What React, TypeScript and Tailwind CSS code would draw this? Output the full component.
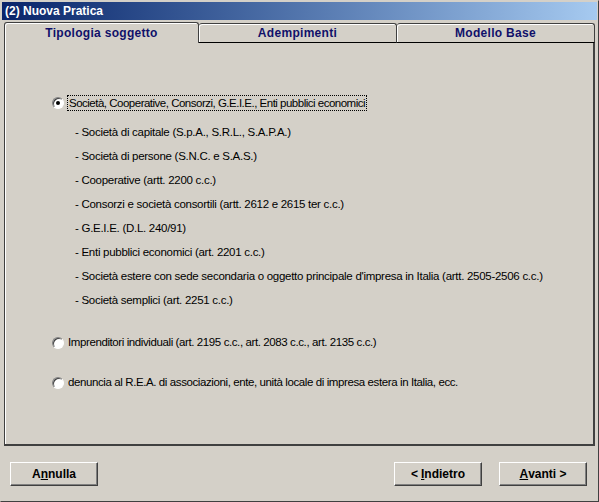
import React from "react"

const items = [
  "- Società di capitale (S.p.A., S.R.L., S.A.P.A.)",
  "- Società di persone (S.N.C. e S.A.S.)",
  "- Cooperative (artt. 2200 c.c.)",
  "- Consorzi e società consortili (artt. 2612 e 2615 ter c.c.)",
  "- G.E.I.E. (D.L. 240/91)",
  "- Enti pubblici economici (art. 2201 c.c.)",
  "- Società estere con sede secondaria o oggetto principale d'impresa in Italia (artt. 2505-2506 c.c.)",
  "- Società semplici (art. 2251 c.c.)",
]

function Radio({ checked }: { checked?: boolean }) {
  return (
    <span className="w-[12px] h-[12px] rounded-full bg-white border border-t-[#808080] border-l-[#808080] border-b-white border-r-white shadow-[inset_1px_1px_0_#404040] flex items-center justify-center shrink-0">
      {checked && <span className="w-[4px] h-[4px] rounded-full bg-black" />}
    </span>
  )
}

function Button({ children }: { children: React.ReactNode }) {
  return (
    <button className="w-[88px] h-[24px] bg-[#d4d0c8] border border-t-white border-l-white border-r-[#404040] border-b-[#404040] shadow-[inset_-1px_-1px_0_#808080] text-[12px] font-bold text-black flex items-center justify-center">
      {children}
    </button>
  )
}

export default function App() {
  return (
    <div
      className="w-[599px] h-[502px] bg-[#d4d0c8] border border-t-[#d4d0c8] border-l-[#d4d0c8] border-r-[#404040] border-b-[#404040] flex flex-col"
      style={{ fontFamily: '"Liberation Sans", Arial, sans-serif' }}
    >
      {/* title bar */}
      <div className="h-[18px] mx-[1px] mt-[1px] bg-gradient-to-r from-[#0a246a] to-[#a6caf0] flex items-center px-[3px]">
        <span className="text-white text-[12px] font-bold">(2) Nuova Pratica</span>
      </div>

      {/* tabs */}
      <div className="flex px-[3px] pt-[2px] h-[23px]">
        <div className="w-[195px] h-[21px] -mb-[1px] relative z-10 bg-[#d4d0c8] border-t border-l border-r border-t-[#404040] border-l-[#404040] border-r-[#404040] rounded-t-[3px] shadow-[inset_1px_1px_0_white] flex items-center justify-center">
          <span className="text-[12px] font-bold text-[#10106a] tracking-[0.3px]">Tipologia soggetto</span>
        </div>
        <div className="w-[198px] h-[20px] mt-[1px] bg-[#d4d0c8] border-t border-r border-[#404040] border-b border-b-black rounded-t-[3px] shadow-[inset_1px_1px_0_white] flex items-center justify-center">
          <span className="text-[12px] font-bold text-[#10106a] tracking-[0.3px]">Adempimenti</span>
        </div>
        <div className="w-[198px] h-[20px] mt-[1px] bg-[#d4d0c8] border-t border-r border-[#404040] border-b border-b-black rounded-t-[3px] shadow-[inset_1px_1px_0_white] flex items-center justify-center">
          <span className="text-[12px] font-bold text-[#10106a] tracking-[0.3px]">Modello Base</span>
        </div>
      </div>

      {/* panel */}
      <div className="mx-[3px] h-[403px] border-l border-l-[#404040] border-r-2 border-r-[#404040] border-b-2 border-b-[#404040] shadow-[inset_1px_0_0_white] pl-[47px] pt-[51px] flex flex-col">
        <div className="flex items-center gap-[3px] h-[18px]">
          <Radio checked />
          <span className="text-[11.5px] text-black border border-dotted border-black px-[1px] leading-[14px] tracking-[-0.5px]">
            Società, Cooperative, Consorzi, G.E.I.E., Enti pubblici economici
          </span>
        </div>
        <div className="flex flex-col pl-[23px] pt-[9px]">
          {items.map((t) => (
            <div key={t} className="h-[24px] flex items-center text-[11.5px] text-black tracking-[-0.28px]">
              {t}
            </div>
          ))}
        </div>
        <div className="flex flex-col gap-[22px] pt-[21px]">
          <div className="flex items-center gap-[4px] h-[18px]">
            <Radio />
            <span className="text-[11.5px] text-black tracking-[-0.4px]">
              Imprenditori individuali (art. 2195 c.c., art. 2083 c.c., art. 2135 c.c.)
            </span>
          </div>
          <div className="flex items-center gap-[4px] h-[18px]">
            <Radio />
            <span className="text-[11.5px] text-black tracking-[-0.4px]">
              denuncia al R.E.A. di associazioni, ente, unità locale di impresa estera in Italia, ecc.
            </span>
          </div>
        </div>
      </div>

      {/* buttons */}
      <div className="flex items-center pl-[9px] pr-[11px] pt-[16px]">
        <Button>
          A<span className="underline">n</span>nulla
        </Button>
        <div className="flex-1" />
        <Button>
          &lt; <span className="underline ml-[3px]">I</span>ndietro
        </Button>
        <div className="w-[17px]" />
        <Button>
          <span className="underline">A</span>vanti &gt;
        </Button>
      </div>
    </div>
  )
}
